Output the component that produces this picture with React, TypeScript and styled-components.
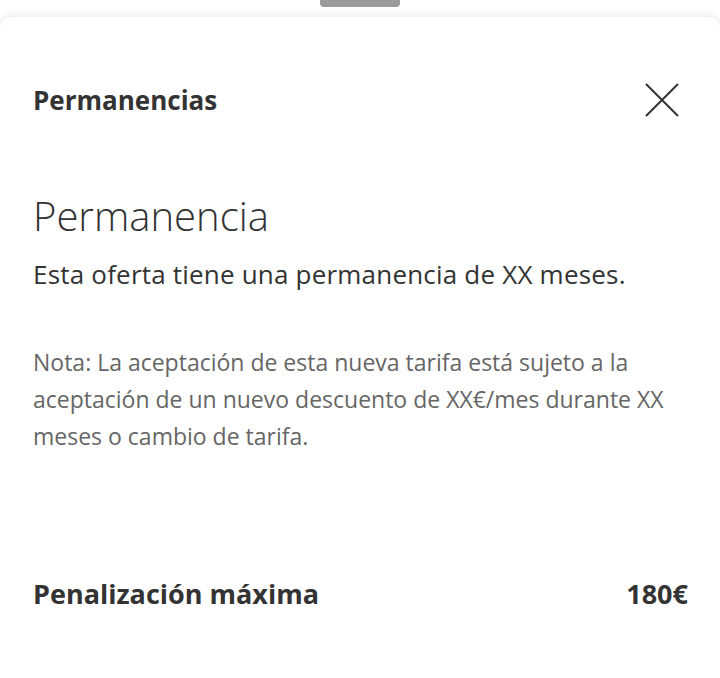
import React from "react";
import styled, { createGlobalStyle } from "styled-components";

const Global = createGlobalStyle`
  html, body { margin: 0; padding: 0; background: #ffffff; }
  body { font-family: "Open Sans", "Noto Sans", sans-serif; color: #333333; }
`;

const Page = styled.div`
  width: 720px;
  height: 678px;
  overflow: hidden;
  display: flex;
  flex-direction: column;
  align-items: center;
  background: #ffffff;
`;

const Handle = styled.div`
  width: 80px;
  height: 7px;
  border-radius: 0 0 4px 4px;
  background: #9a9a9a;
  flex-shrink: 0;
`;

const Sheet = styled.div`
  margin-top: 10px;
  width: 720px;
  flex: 1;
  background: #ffffff;
  border-radius: 12px 12px 0 0;
  box-shadow: 0 -2px 8px rgba(0, 0, 0, 0.08);
  box-sizing: border-box;
  padding: 0 32px 0 33px;
  display: flex;
  flex-direction: column;
`;

const Header = styled.div`
  display: flex;
  align-items: center;
  justify-content: space-between;
  height: 50px;
  margin-top: 58px;
`;

const HeaderTitle = styled.h2`
  margin: 0;
  font-size: 26px;
  font-weight: 700;
  color: #333333;
`;

const CloseButton = styled.button`
  border: 0;
  background: transparent;
  padding: 0;
  width: 36px;
  height: 36px;
  margin-right: 8px;
  display: flex;
  align-items: center;
  justify-content: center;
  cursor: pointer;
`;

const Title = styled.h1`
  margin: 66px 0 0 0;
  font-size: 40px;
  font-weight: 300;
  line-height: 50px;
  color: #333333;
`;

const Lead = styled.p`
  margin: 17px 0 0 0;
  font-size: 26px;
  line-height: 32px;
  letter-spacing: 0.2px;
  color: #333333;
`;

const Note = styled.p`
  margin: 54px 0 0 0;
  font-size: 23px;
  line-height: 37px;
  color: #666666;
`;

const Row = styled.div`
  margin-top: 120px;
  display: flex;
  justify-content: space-between;
  align-items: center;
`;

const RowLabel = styled.span`
  font-size: 27px;
  font-weight: 700;
  color: #333333;
`;

export default function App() {
  return (
    <Page>
      <Global />
      <Handle />
      <Sheet>
        <Header>
          <HeaderTitle>Permanencias</HeaderTitle>
          <CloseButton aria-label="Cerrar">
            <svg width="34" height="34" viewBox="0 0 34 34">
              <path d="M1 1 L33 33 M33 1 L1 33" stroke="#333333" strokeWidth="2" fill="none" />
            </svg>
          </CloseButton>
        </Header>
        <Title>Permanencia</Title>
        <Lead>Esta oferta tiene una permanencia de XX meses.</Lead>
        <Note>
          Nota: La aceptación de esta nueva tarifa está sujeto a la aceptación de un nuevo descuento de XX€/mes durante XX meses o cambio de tarifa.
        </Note>
        <Row>
          <RowLabel>Penalización máxima</RowLabel>
          <RowLabel>180€</RowLabel>
        </Row>
      </Sheet>
    </Page>
  );
}
